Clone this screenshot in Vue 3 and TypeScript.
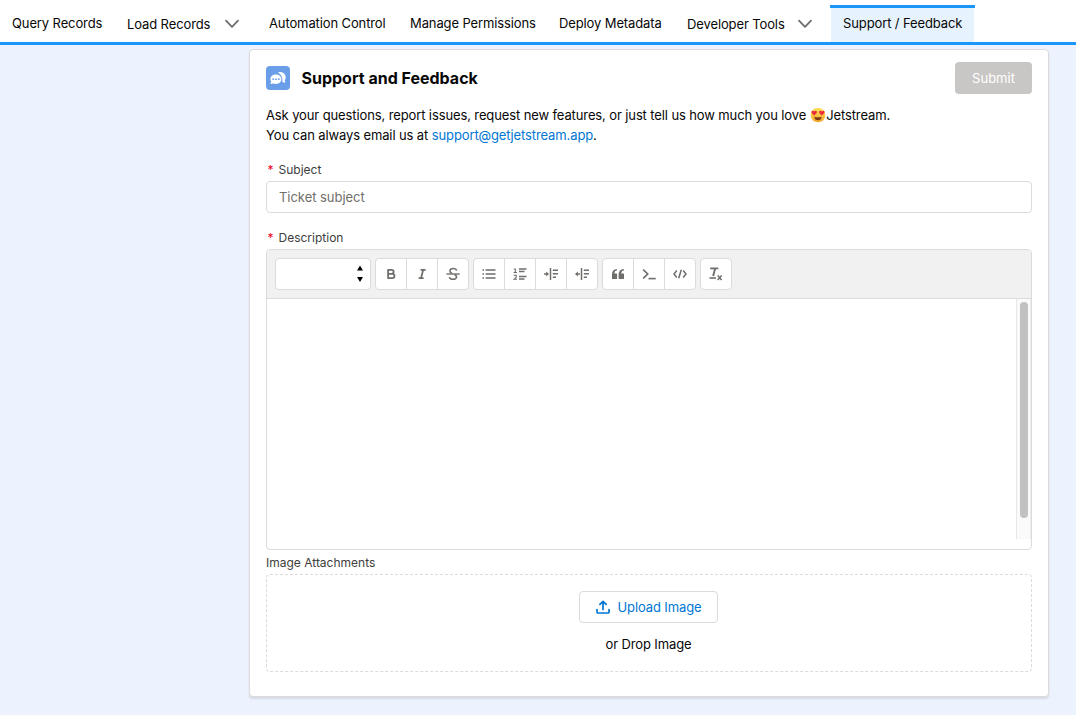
<script setup lang="ts">
import { ref } from 'vue'

interface NavItem {
  label: string
  width: number
  menu?: boolean
  active?: boolean
}

const navItems: NavItem[] = [
  { label: 'Query Records', width: 115 },
  { label: 'Load Records', width: 142, menu: true },
  { label: 'Automation Control', width: 141 },
  { label: 'Manage Permissions', width: 149 },
  { label: 'Deploy Metadata', width: 128 },
  { label: 'Developer Tools', width: 155, menu: true },
  { label: 'Support / Feedback', width: 145, active: true },
]

const toolGroups: string[][] = [
  ['bold', 'italic', 'strike'],
  ['bullets', 'numbers', 'indent', 'outdent'],
  ['quote', 'prompt', 'code'],
  ['clear'],
]

const subject = ref('')
</script>

<template>
  <div class="page">
    <nav class="nav">
      <a
        v-for="item in navItems"
        :key="item.label"
        class="nav-item"
        :class="{ active: item.active, menu: item.menu }"
        :style="{ width: item.width + 'px' }"
      >
        <span class="nav-label">{{ item.label }}</span>
        <svg v-if="item.menu" class="chevron" width="16" height="10" viewBox="0 0 16 10">
          <path d="M2 1.6 L8 7.8 L14 1.6" fill="none" stroke="#706e6b" stroke-width="1.8" stroke-linecap="round" stroke-linejoin="round" />
        </svg>
      </a>
    </nav>

    <main class="card">
      <header class="card-head">
        <span class="brand">
          <svg width="24" height="24" viewBox="0 0 24 24">
            <path d="M12 6.300c4-1 7.700 1.300 7.700 4.900 0 1.300-.4 2.200-1 3l.5 2.100c.1.400-.1.600-.5.500l-2.300-.9c.6-3.900-1-7.400-4.400-9.600z" fill="#fff" />
            <path d="M9.900 8.600c-3.200 0-5.500 2-5.500 4.600 0 .9.300 1.800.8 2.500l-.7 1.900c-.1.300.1.600.5.500l2.200-.7c.8.3 1.700.5 2.700.5 3.100 0 5.500-2.100 5.500-4.700s-2.400-4.600-5.500-4.600z" fill="#fff" />
            <g fill="#6b9ee8">
              <circle cx="7.200" cy="13.200" r="0.900" />
              <circle cx="10" cy="13.200" r="0.900" />
              <circle cx="12.800" cy="13.200" r="0.900" />
            </g>
          </svg>
        </span>
        <h1>Support and Feedback</h1>
        <button class="submit" disabled>Submit</button>
      </header>

      <div class="intro">
        <p>
          <span>Ask your questions, report issues, request new features, or just tell us how much you love</span>
          <svg class="emoji" width="16" height="16" viewBox="0 0 16 16">
            <defs>
              <linearGradient id="face" x1="0" y1="0" x2="0" y2="1">
                <stop offset="0" stop-color="#ffe15c" />
                <stop offset="1" stop-color="#f5a52c" />
              </linearGradient>
            </defs>
            <circle cx="8" cy="8" r="7.300" fill="url(#face)" />
            <path d="M4.200 8.400 L1.700 5.900 C0.800 4 2.900 3.100 4.200 4.600 C5.400 3.100 7.500 4 6.700 5.900Z" fill="#ed2939" />
            <path d="M11.800 8.400 L9.300 5.900 C8.500 4 10.600 3.100 11.800 4.600 C13.100 3.100 15.200 4 14.300 5.900Z" fill="#ed2939" />
            <path d="M4.300 9.700 Q8 11 11.700 9.700 Q11.200 13.200 8 13.200 Q4.800 13.200 4.300 9.700Z" fill="#7c3b16" />
          </svg>
          <span>Jetstream.</span>
        </p>
        <p><span>You can always email us at <a>support@getjetstream.app</a>.</span></p>
      </div>

      <label class="label"><abbr>*</abbr>Subject</label>
      <input v-model="subject" class="subject" type="text" placeholder="Ticket subject" />

      <label class="label"><abbr>*</abbr>Description</label>
      <section class="editor">
        <div class="toolbar">
          <div class="picker">
            <svg width="6" height="18" viewBox="0 0 6 18">
              <path d="M3 0.500 L6 5.500 H0Z M3 17 L6 12 H0Z" fill="#000" />
            </svg>
          </div>
          <div v-for="(group, g) in toolGroups" :key="g" class="group">
            <button v-for="tool in group" :key="tool" class="tool">
              <svg width="16" height="16" viewBox="0 0 16 16" fill="none" stroke="#706e6b" stroke-width="1.500">
                <path v-if="tool === 'bold'" d="M5 3.900 H8.700 a1.950 1.950 0 0 1 0 3.900 H5 M5 7.800 H9.300 a2.150 2.150 0 0 1 0 4.300 H5 M5.100 3.200 V12.800" stroke-width="1.800" />
                <path v-else-if="tool === 'italic'" d="M6.600 3.800 H11.600 M4.600 12.200 H9.600 M9.200 3.800 L7 12.200" stroke-width="1.700" />
                <g v-else-if="tool === 'strike'">
                  <path d="M11.700 4.500 C11 1.900 5.200 1.700 4.900 4.700 C4.800 6 5.600 6.700 7 7.200" />
                  <path d="M9.500 8.700 C11 9.200 11.700 9.900 11.500 11.200 C11 14.200 4.900 14 4.400 11.100" />
                  <path d="M1.500 8 H14.700" stroke-width="1.400" />
                </g>
                <g v-else-if="tool === 'bullets'">
                  <path d="M4.600 4 H14.500 M4.600 8 H14.500 M4.600 12 H14.500" stroke-width="1.300" />
                  <path d="M1.500 4 H3 M1.500 8 H3 M1.500 12 H3" stroke-width="1.500" />
                </g>
                <g v-else-if="tool === 'numbers'">
                  <path d="M7 3 H14.500 M7 5.500 H12.500 M7 10.500 H14.500 M7 13 H12.500" stroke-width="1.400" />
                  <path d="M1.800 3 H3.300 V6.500 M1.600 6.500 H5 M1.600 9.300 H4.200 V11.200 L2.100 13.200 H5" stroke-width="1.100" />
                </g>
                <g v-else-if="tool === 'indent'">
                  <path d="M7.500 2 V14" />
                  <path d="M9.800 4.200 H15 M9.800 7.700 H15 M9.800 11.200 H13" stroke-width="1.400" />
                  <path d="M1 8 H4" stroke-width="1.500" />
                  <path d="M3.200 5.500 L6 8 L3.200 10.500Z" fill="#706e6b" stroke="none" />
                </g>
                <g v-else-if="tool === 'outdent'">
                  <path d="M7.500 2 V14" />
                  <path d="M9.800 4.200 H15 M9.800 7.700 H15 M9.800 11.200 H13" stroke-width="1.400" />
                  <path d="M3 8 H6" stroke-width="1.500" />
                  <path d="M3.800 5.500 L1 8 L3.800 10.500Z" fill="#706e6b" stroke="none" />
                </g>
                <g v-else-if="tool === 'quote'" fill="#706e6b" stroke="none">
                  <path d="M6.900 2.900 V4.500 C5.300 4.700 4.500 5.600 4.400 7.400 H6.500 Q7.100 7.400 7.100 8 V12.400 Q7.100 13 6.500 13 H2.600 Q2 13 2 12.400 V8.300 C2 5 3.700 3 6.900 2.900Z" />
                  <path d="M13.900 2.900 V4.500 C12.300 4.700 11.400 5.600 11.300 7.400 H13.400 Q14 7.400 14 8 V12.400 Q14 13 13.400 13 H9.200 Q8.600 13 8.600 12.400 V8.300 C8.600 5 10.500 3 13.900 2.900Z" />
                </g>
                <g v-else-if="tool === 'prompt'">
                  <path d="M2.200 3.600 L6.700 8 L2.200 12.300" stroke-width="1.700" />
                  <path d="M7.500 12.600 H14.700" stroke-width="1.600" />
                </g>
                <g v-else-if="tool === 'code'">
                  <path d="M4.800 4.500 L2 8 L4.800 11.500 M11.200 4.500 L14 8 L11.200 11.500" />
                  <path d="M9.300 3.700 L6.700 12.300" />
                </g>
                <g v-else>
                  <path d="M2.200 2.400 H10.300" stroke-width="1.800" />
                  <path d="M7.100 2.500 L5.200 10" stroke-width="1.900" />
                  <path d="M1.500 12 H8" stroke-width="1.600" />
                  <path d="M9.700 9.600 L13.600 13.900 M13.600 9.600 L9.700 13.900" stroke-width="1.500" />
                </g>
              </svg>
            </button>
          </div>
        </div>
        <div class="writing">
          <div class="track"><div class="thumb"></div></div>
        </div>
      </section>

      <span class="attach-label">Image Attachments</span>
      <section class="drop">
        <button class="upload">
          <svg width="14" height="14" viewBox="0 0 14 14" fill="none" stroke="#0176d3" stroke-width="1.700" stroke-linecap="round" stroke-linejoin="round">
            <path d="M1 9.500 V12 Q1 13 2 13 H12 Q13 13 13 12 V9.500" />
            <path d="M7 9.500 V1.500 M3.900 4.400 L7 1.400 L10.100 4.400" />
          </svg>
          <span>Upload Image</span>
        </button>
        <span class="drop-text">or Drop Image</span>
      </section>
    </main>
  </div>
</template>

<style>
body {
  background: #ecf3ff;
  overflow: hidden;
}
</style>

<style scoped>
* {
  box-sizing: border-box;
}
.page {
  height: 715px;
  font-family: Inter, "Liberation Sans", sans-serif;
  font-size: 13px;
  line-height: 20px;
  letter-spacing: -0.115px;
  color: #080707;
}
.nav {
  display: flex;
  height: 45px;
  padding-top: 5px;
  background: #fff;
  border-bottom: 3px solid #1b96ff;
}
.nav-item {
  display: flex;
  justify-content: space-between;
  flex: none;
  height: 37px;
  padding: 8px 12px 0;
  white-space: nowrap;
}
.nav-item.menu {
  padding-top: 9px;
}
.nav-item.active {
  padding: 5px 12px 0 13px;
  border-top: 3px solid #1b96ff;
  background: linear-gradient(#e6f3fe, #e6f3fe) center / 143px 100% no-repeat;
  background-origin: padding-box;
  background-clip: padding-box;
}
.chevron {
  margin-top: 5px;
  margin-right: 5px;
}
.card {
  width: 800px;
  height: 648px;
  margin: 4px 0 0 249px;
  padding: 12px 16px 0;
  background: #fff;
  border: 1px solid #dddbda;
  border-radius: 4px;
  box-shadow: 0 2px 2px rgba(0, 0, 0, 0.1);
}
.card-head {
  display: flex;
  align-items: center;
  height: 32px;
}
.brand {
  display: flex;
  width: 24px;
  height: 24px;
  border-radius: 4px;
  background: #6b9ee8;
}
h1 {
  margin: 0 auto 0 11.5px;
  font-size: 16px;
  font-weight: 700;
  line-height: 20px;
  letter-spacing: 0;
}
.submit {
  width: 77px;
  height: 32px;
  padding: 0;
  border: 0;
  border-radius: 4px;
  background: #c9c7c5;
  color: #fff;
  font: inherit;
}
.intro {
  margin-top: 11px;
}
.intro p {
  display: flex;
  margin: 0;
  height: 20px;
  white-space: nowrap;
}
.intro a {
  color: #0176d3;
}
.emoji {
  margin: 2px 0 0 4px;
}
.label {
  display: block;
  height: 18px;
  margin-top: 16px;
  padding-left: 1.5px;
  font-size: 12px;
  line-height: 18px;
  letter-spacing: 0;
  color: #3e3e3c;
}
.label abbr {
  display: inline-block;
  width: 11px;
  color: #ea001e;
}
.subject {
  display: block;
  width: 766px;
  height: 32px;
  margin-top: 2px;
  padding: 0 12px;
  border: 1px solid #dddbda;
  border-radius: 4px;
  font: inherit;
  letter-spacing: -0.04px;
  outline: none;
}
.subject::placeholder {
  color: #706e6b;
  opacity: 1;
}
.editor {
  height: 301px;
  margin-top: 2px;
  border: 1px solid #dddbda;
  border-radius: 4px;
  overflow: hidden;
}
.toolbar {
  display: flex;
  gap: 4px;
  height: 49px;
  padding: 8px;
  background: #f1f1f1;
  border-bottom: 1px solid #dddbda;
}
.picker,
.group {
  display: flex;
  height: 32px;
  background: #fff;
  border: 1px solid #dddbda;
  border-radius: 4px;
}
.picker {
  width: 96px;
  align-items: center;
  justify-content: flex-end;
  padding-right: 7px;
}
.tool {
  display: flex;
  align-items: center;
  justify-content: center;
  width: 30px;
  height: 30px;
  padding: 0;
  border: 0;
  background: none;
}
.tool + .tool {
  width: 31px;
  border-left: 1px solid #dddbda;
}
.writing {
  display: flex;
  justify-content: flex-end;
  height: 240px;
}
.track {
  width: 15px;
  padding: 3px 2px 0 3px;
  background: #fafafa;
  border-left: 1px solid #e8e8e8;
  border-right: 1px solid #ededed;
}
.thumb {
  width: 8px;
  height: 216px;
  border-radius: 4px;
  background: #c1c1c1;
}
.attach-label {
  display: block;
  height: 18px;
  margin-top: 4px;
  font-size: 12px;
  line-height: 18px;
  letter-spacing: 0;
  color: #3e3e3c;
}
.drop {
  display: flex;
  flex-direction: column;
  align-items: center;
  height: 98px;
  margin-top: 2px;
  padding: 16px 1px 0 0;
  border: 1px dashed #dddbda;
  border-radius: 4px;
}
.upload {
  display: flex;
  align-items: center;
  justify-content: center;
  gap: 8px;
  width: 139px;
  height: 32px;
  padding: 0;
  border: 1px solid #dddbda;
  border-radius: 4px;
  background: #fff;
  color: #0176d3;
  font: inherit;
  letter-spacing: -0.115px;
}
.drop-text {
  margin-top: 11px;
}
</style>
